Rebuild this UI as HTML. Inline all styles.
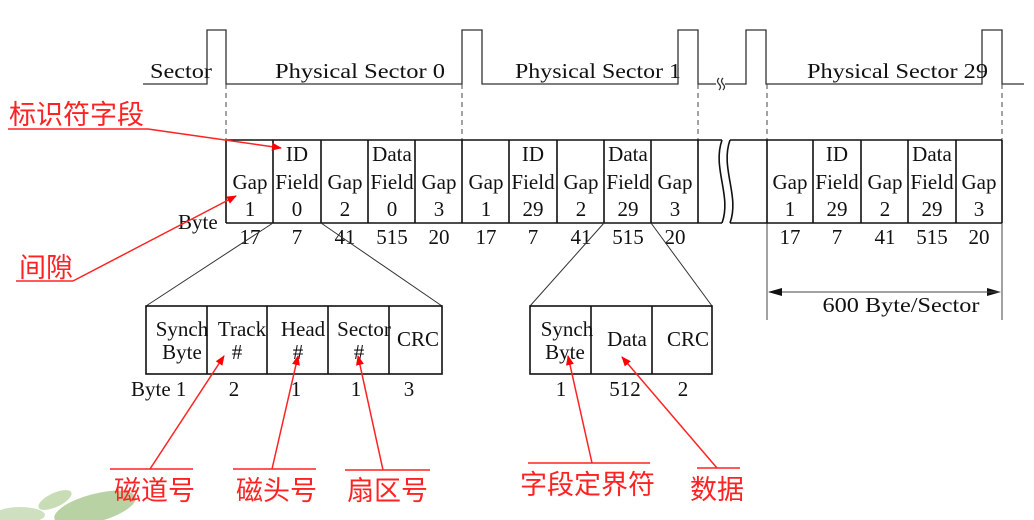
<!DOCTYPE html>
<html><head><meta charset="utf-8"><style>
html,body{margin:0;padding:0;background:#fff;}
svg{display:block;}
.t{font-family:"Liberation Serif",serif;font-size:21px;fill:#111;}
.r{font-family:"Liberation Sans","Noto Sans CJK SC",sans-serif;font-size:27px;fill:#f22;}
</style></head><body>
<svg width="1034" height="520" viewBox="0 0 1034 520" xmlns="http://www.w3.org/2000/svg">
<defs>
<marker id="ra" markerWidth="10" markerHeight="8" refX="9" refY="4" orient="auto" markerUnits="userSpaceOnUse"><path d="M0,0 L10,4 L0,8 z" fill="#f00"/></marker>
<marker id="ka" markerWidth="14" markerHeight="8" refX="13" refY="4" orient="auto" markerUnits="userSpaceOnUse"><path d="M0,0 L14,4 L0,8 z" fill="#111"/></marker>
</defs>
<g opacity="0.55">
<ellipse cx="95" cy="508" rx="42" ry="14" fill="#7fae5a" transform="rotate(-15 95 508)"/>
<ellipse cx="55" cy="500" rx="18" ry="7" fill="#9cc27a" transform="rotate(-25 55 500)"/>
<ellipse cx="20" cy="515" rx="25" ry="8" fill="#a8c890"/>
</g>
<g stroke="#333" stroke-width="1.3" fill="none">
<path d="M143,84 H207 V30 H226 V84 H462 V30 H482 V84 H678 V30 H698 V84 H716"/>
<path d="M719,78 q-3,3 0,6 q3,3 0,6 M723,78 q-3,3 0,6 q3,3 0,6"/>
<path d="M725,84 H746 V30 H766 V84 H982 V30 H1002 V84 H1024"/>
</g>
<g stroke="#444" stroke-width="1" stroke-dasharray="5,4">
<line x1="226" y1="84" x2="226" y2="140"/>
<line x1="462" y1="84" x2="462" y2="140"/>
<line x1="698" y1="84" x2="698" y2="140"/>
<line x1="767" y1="84" x2="767" y2="140"/>
<line x1="1002" y1="84" x2="1002" y2="140"/>
</g>
<g stroke="#444" stroke-width="1">
<line x1="767" y1="223" x2="767" y2="320"/>
<line x1="1002" y1="223" x2="1002" y2="320"/>
<line x1="769" y1="292" x2="1000" y2="292" marker-end="url(#ka)"/>
<line x1="1000" y1="292" x2="769" y2="292" marker-end="url(#ka)"/>
</g>
<text class="t" x="150" y="78" textLength="62" lengthAdjust="spacingAndGlyphs">Sector</text>
<text class="t" x="275" y="78" textLength="170" lengthAdjust="spacingAndGlyphs">Physical Sector 0</text>
<text class="t" x="515" y="78" textLength="166" lengthAdjust="spacingAndGlyphs">Physical Sector 1</text>
<text class="t" x="807" y="78" textLength="181" lengthAdjust="spacingAndGlyphs">Physical Sector 29</text>
<g stroke="#111" stroke-width="1.6" fill="none">
<path d="M226,140 H722 M226,223 H722"/>
<path d="M730,140 H1002 M730,223 H1002"/>
<path d="M226,140 V223 M273,140 V223 M321,140 V223 M368,140 V223 M415,140 V223 M462,140 V223 M509,140 V223 M557,140 V223 M604,140 V223 M651,140 V223 M698,140 V223"/>
<path d="M767,140 V223 M813,140 V223 M861,140 V223 M908,140 V223 M956,140 V223 M1002,140 V223"/>
<path d="M722,140 C712,168 732,196 722,223 M730,140 C720,168 740,196 730,223"/>
</g>
<g class="t" text-anchor="middle">
<text x="250" y="189">Gap</text><text x="250" y="216">1</text>
<text x="297" y="161">ID</text><text x="297" y="189">Field</text><text x="297" y="216">0</text>
<text x="345" y="189">Gap</text><text x="345" y="216">2</text>
<text x="392" y="161">Data</text><text x="392" y="189">Field</text><text x="392" y="216">0</text>
<text x="439" y="189">Gap</text><text x="439" y="216">3</text>
<text x="486" y="189">Gap</text><text x="486" y="216">1</text>
<text x="533" y="161">ID</text><text x="533" y="189">Field</text><text x="533" y="216">29</text>
<text x="581" y="189">Gap</text><text x="581" y="216">2</text>
<text x="628" y="161">Data</text><text x="628" y="189">Field</text><text x="628" y="216">29</text>
<text x="675" y="189">Gap</text><text x="675" y="216">3</text>
<text x="790" y="189">Gap</text><text x="790" y="216">1</text>
<text x="837" y="161">ID</text><text x="837" y="189">Field</text><text x="837" y="216">29</text>
<text x="885" y="189">Gap</text><text x="885" y="216">2</text>
<text x="932" y="161">Data</text><text x="932" y="189">Field</text><text x="932" y="216">29</text>
<text x="979" y="189">Gap</text><text x="979" y="216">3</text>
<text x="250" y="244">17</text><text x="297" y="244">7</text><text x="345" y="244">41</text><text x="392" y="244">515</text><text x="439" y="244">20</text>
<text x="486" y="244">17</text><text x="533" y="244">7</text><text x="581" y="244">41</text><text x="628" y="244">515</text><text x="675" y="244">20</text>
<text x="790" y="244">17</text><text x="837" y="244">7</text><text x="885" y="244">41</text><text x="932" y="244">515</text><text x="979" y="244">20</text>
<text x="901" y="312" textLength="157" lengthAdjust="spacingAndGlyphs">600 Byte/Sector</text>
</g>
<text class="t" x="178" y="229">Byte</text>
<g stroke="#333" stroke-width="1">
<line x1="273" y1="223" x2="146" y2="306"/>
<line x1="321" y1="223" x2="442" y2="306"/>
<line x1="604" y1="223" x2="530" y2="306"/>
<line x1="651" y1="223" x2="712" y2="306"/>
</g>
<g stroke="#111" stroke-width="1.6" fill="none">
<rect x="146" y="306" width="296" height="68"/>
<path d="M207,306 V374 M267,306 V374 M328,306 V374 M389,306 V374"/>
<rect x="530" y="306" width="182" height="68"/>
<path d="M591,306 V374 M652,306 V374"/>
</g>
<g class="t" text-anchor="middle">
<text x="182" y="336">Synch</text><text x="182" y="359">Byte</text>
<text x="242" y="336">Track</text><text x="237" y="359">#</text>
<text x="303" y="336">Head</text><text x="298" y="359">#</text>
<text x="364" y="336">Sector</text><text x="359" y="359">#</text>
<text x="418" y="346">CRC</text>
<text x="567" y="336">Synch</text><text x="565" y="359">Byte</text>
<text x="627" y="346">Data</text>
<text x="688" y="346">CRC</text>
<text x="131" y="396" text-anchor="start">Byte 1</text>
<text x="234" y="396">2</text><text x="296" y="396">1</text><text x="356" y="396">1</text><text x="409" y="396">3</text>
<text x="561" y="396">1</text><text x="625" y="396">512</text><text x="683" y="396">2</text>
</g>
<g stroke="#f22" stroke-width="1.5" fill="none">
<line x1="8" y1="129" x2="148" y2="129"/>
<line x1="148" y1="129" x2="281" y2="148" marker-end="url(#ra)"/>
<line x1="16" y1="281" x2="73" y2="281"/>
<line x1="73" y1="281" x2="236" y2="196" marker-end="url(#ra)"/>
<line x1="110" y1="469" x2="193" y2="469"/>
<line x1="150" y1="469" x2="224" y2="356" marker-end="url(#ra)"/>
<line x1="233" y1="469" x2="316" y2="469"/>
<line x1="272" y1="469" x2="298" y2="356" marker-end="url(#ra)"/>
<line x1="345" y1="470" x2="430" y2="470"/>
<line x1="383" y1="470" x2="358" y2="356" marker-end="url(#ra)"/>
<line x1="528" y1="463" x2="650" y2="463"/>
<line x1="592" y1="463" x2="568" y2="356" marker-end="url(#ra)"/>
<line x1="697" y1="468" x2="740" y2="468"/>
<line x1="717" y1="468" x2="622" y2="357" marker-end="url(#ra)"/>
</g>
<text class="r" x="9" y="124">标识符字段</text>
<text class="r" x="19" y="277">间隙</text>
<text class="r" x="114" y="500">磁道号</text>
<text class="r" x="236" y="500">磁头号</text>
<text class="r" x="347" y="500">扇区号</text>
<text class="r" x="520" y="494">字段定界符</text>
<text class="r" x="690" y="499">数据</text>
</svg>
</body></html>
